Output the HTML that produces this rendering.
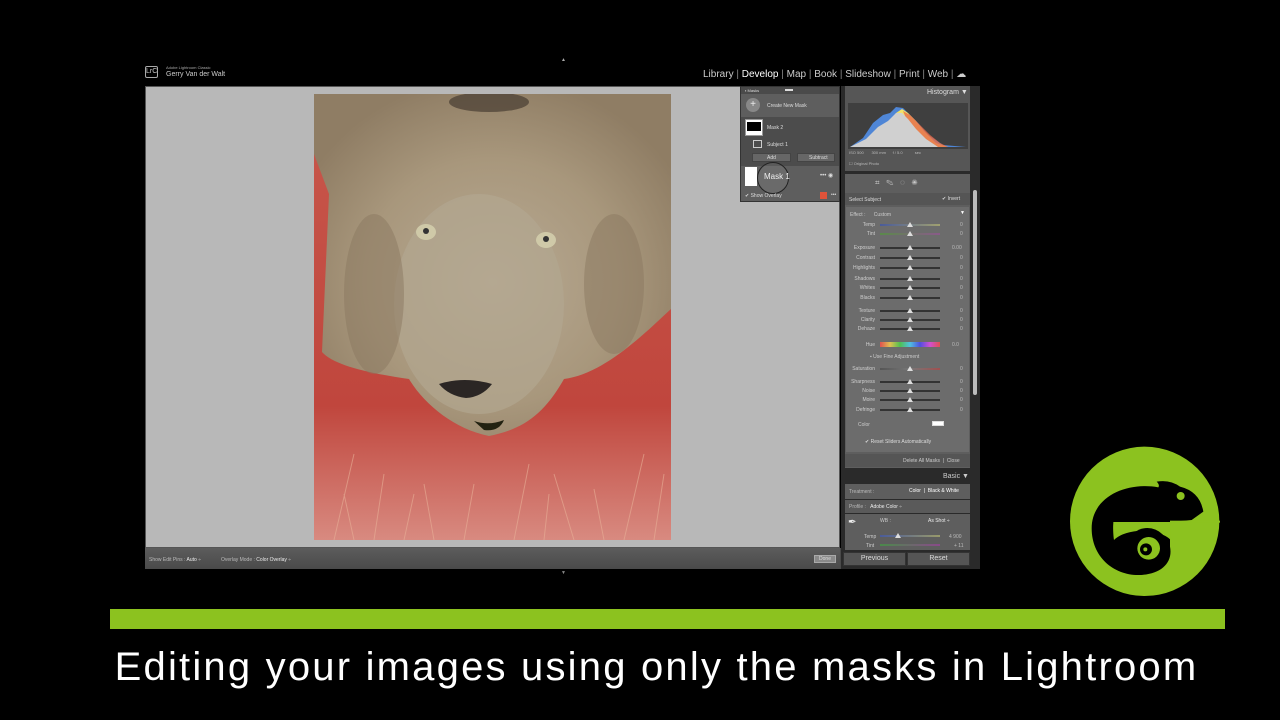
<!DOCTYPE html>
<html><head><meta charset="utf-8"><style>
*{margin:0;padding:0;box-sizing:border-box}
body{width:1280px;height:720px;background:#000;position:relative;overflow:hidden;font-family:"Liberation Sans",sans-serif}
.a{position:absolute}
.t{position:absolute;font-size:5px;color:#ddd;white-space:nowrap}
.lbl{position:absolute;font-size:5px;color:#cfcfcf;text-align:right;width:40px}
.sl{position:absolute;height:2px;background:#333}
.th{position:absolute;width:0;height:0;border-left:3px solid transparent;border-right:3px solid transparent;border-bottom:5px solid #ddd}
.val{position:absolute;font-size:5px;color:#bbb}
</style></head><body>
<!-- header -->
<div class="a" style="left:145px;top:66px;width:13px;height:12px;border:1px solid #aaa;border-radius:2px;font-size:7px;color:#ccc;text-align:center;line-height:10px">LrC</div>
<div class="t" style="left:166px;top:65px;font-size:4px;color:#aaa">Adobe Lightroom Classic</div>
<div class="t" style="left:166px;top:71px;font-size:7px;color:#ccc">Gerry Van der Walt</div>
<div class="t" style="left:561px;top:57px;font-size:5px;color:#aaa">▲</div>
<div class="t" style="left:703px;top:69px;font-size:10px;color:#ccc">Library <span style="color:#888">|</span> <b style="color:#fff;font-weight:normal">Develop</b> <span style="color:#888">|</span> Map <span style="color:#888">|</span> Book <span style="color:#888">|</span> Slideshow <span style="color:#888">|</span> Print <span style="color:#888">|</span> Web <span style="color:#888">|</span> ☁</div>
<!-- canvas -->
<div class="a" style="left:145px;top:86px;width:695px;height:462px;background:#b8b8b8;border:1px solid #555"></div>
<svg class="a" style="left:314px;top:94px" width="357" height="446" viewBox="0 0 357 446">
<defs>
<linearGradient id="r" x1="0" y1="0" x2="0" y2="1"><stop offset="0" stop-color="#c8584c"/><stop offset=".7" stop-color="#c0463d"/><stop offset="1" stop-color="#d88a80"/></linearGradient>
<radialGradient id="m" cx=".5" cy=".55" r=".6"><stop offset="0" stop-color="#b8aa94"/><stop offset=".6" stop-color="#a8977c"/><stop offset="1" stop-color="#8f7d64"/></radialGradient>
</defs>
<rect width="357" height="446" fill="url(#r)"/>
<path d="M0,0H357V215C330,240 290,280 250,285C230,320 210,335 175,342C140,335 110,310 95,285C60,280 20,272 8,258L15,100L0,60Z" fill="url(#m)"/>
<ellipse cx="165" cy="210" rx="85" ry="110" fill="#b2a690" opacity=".7"/>
<ellipse cx="175" cy="8" rx="40" ry="10" fill="#3a3028" opacity=".6"/>
<ellipse cx="60" cy="200" rx="30" ry="80" fill="#8a7860" opacity=".5"/>
<ellipse cx="300" cy="190" rx="30" ry="70" fill="#8a7860" opacity=".5"/>
<ellipse cx="112" cy="138" rx="10" ry="8" fill="#cfc9a8"/><circle cx="112" cy="137" r="3" fill="#333"/>
<ellipse cx="232" cy="146" rx="10" ry="8" fill="#cfc9a8"/><circle cx="232" cy="145" r="3" fill="#333"/>
<path d="M125,290Q150,282 178,290Q168,303 152,304Q135,302 125,290Z" fill="#2b2624"/>
<path d="M160,327Q175,332 190,326Q185,338 170,336Z" fill="#221"/>
<g stroke="#e8b098" stroke-width="1" opacity=".6" fill="none">
<path d="M20,446L40,360M60,446L70,380M120,446L110,390M200,446L215,370M260,446L240,380M310,446L330,360M90,446L100,400M340,446L350,380M230,446L235,400M40,446L30,400M150,446L160,390M290,446L280,395"/></g>
</svg>
<!-- masks panel -->
<div class="a" style="left:740px;top:86px;width:100px;height:116px;background:#5e5e5e;border:1px solid #333"></div>
<div class="a" style="left:741px;top:87px;width:98px;height:7px;background:#4a4a4a"></div>
<div class="t" style="left:745px;top:88px;font-size:4px">▪ Masks</div>
<div class="a" style="left:785px;top:89px;width:8px;height:1.5px;background:#ddd"></div>
<div class="a" style="left:746px;top:98px;width:14px;height:14px;border-radius:50%;background:#888;color:#eee;font-size:10px;text-align:center;line-height:14px">+</div>
<div class="t" style="left:767px;top:103px">Create New Mask</div>
<div class="a" style="left:741px;top:117px;width:98px;height:49px;background:#4c4c4c"></div>
<div class="a" style="left:745px;top:119px;width:18px;height:17px;background:#fff;border:1px solid #999"><div class="a" style="left:1px;top:2px;width:14px;height:9px;background:#000"></div></div>
<div class="t" style="left:767px;top:125px">Mask 2</div>
<div class="a" style="left:753px;top:140px;width:9px;height:8px;border:1px solid #ccc"></div>
<div class="t" style="left:767px;top:142px">Subject 1</div>
<div class="a" style="left:752px;top:153px;width:39px;height:9px;background:#666;border:1px solid #444"></div>
<div class="t" style="left:767px;top:155px">Add</div>
<div class="a" style="left:797px;top:153px;width:38px;height:9px;background:#666;border:1px solid #444"></div>
<div class="t" style="left:809px;top:155px">Subtract</div>
<div class="a" style="left:745px;top:167px;width:12px;height:19px;background:#fff"></div>
<div class="a" style="left:757px;top:162px;width:32px;height:32px;border-radius:50%;border:1px solid #222;background:rgba(255,255,255,.08)"></div>
<div class="t" style="left:764px;top:172px;font-size:8px;color:#eee">Mask 1</div>
<div class="t" style="left:820px;top:172px;font-size:6px">••• ◉</div>
<div class="t" style="left:745px;top:193px">✔ Show Overlay</div>
<div class="a" style="left:820px;top:192px;width:7px;height:7px;background:#e0533a"></div>
<div class="t" style="left:831px;top:192px">•••</div>
<!-- bottom toolbar -->
<div class="a" style="left:145px;top:548px;width:695px;height:21px;background:linear-gradient(#5c5c5c,#4a4a4a)"></div>
<div class="a" style="left:840px;top:548px;width:3px;height:21px;background:#4a4a4a"></div>
<div class="t" style="left:149px;top:557px;color:#bbb">Show Edit Pins : <span style="color:#eee">Auto</span> ÷</div>
<div class="t" style="left:221px;top:557px;color:#bbb">Overlay Mode : <span style="color:#eee">Color Overlay</span> ÷</div>
<div class="a" style="left:814px;top:555px;width:22px;height:8px;background:#8a8a8a;border:1px solid #aaa;font-size:5px;color:#ddd;text-align:center;line-height:7px">Done</div>
<div class="t" style="left:561px;top:570px;font-size:5px;color:#888">▼</div>
<!-- right panel -->
<div class="a" style="left:841px;top:86px;width:139px;height:483px;background:#2a2a2a"></div>
<div class="a" style="left:845px;top:86px;width:125px;height:85px;background:#565656"></div>
<div class="t" style="left:927px;top:89px;font-size:7px;color:#ddd">Histogram ▼</div>
<svg class="a" style="left:848px;top:103px" width="120" height="46"><rect width="120" height="46" fill="#3f3f3f"/>
<path d="M2,44L15,35L25,20L35,12L42,10L48,4L55,5L62,12L70,20L80,32L95,42L118,44Z" fill="#4f86d6"/>
<path d="M30,44L40,22L48,10L54,6L60,10L68,18L76,28L88,40L100,44Z" fill="#f1e26a"/>
<path d="M55,8L62,12L72,22L82,32L92,40L100,44L70,44Z" fill="#e66a4a" opacity=".8"/>
<path d="M2,44L18,36L30,24L40,18L48,10L54,10L60,16L68,26L78,36L90,44Z" fill="#d0d0d0"/></svg>
<div class="t" style="left:849px;top:150px;font-size:4px;color:#bbb">ISO 500 &nbsp;&nbsp;&nbsp;&nbsp;&nbsp; 300 mm &nbsp;&nbsp;&nbsp;&nbsp; f / 5.0 &nbsp;&nbsp;&nbsp;&nbsp;&nbsp;&nbsp;&nbsp;&nbsp;&nbsp; sec</div>
<div class="t" style="left:849px;top:161px;font-size:4px;color:#bbb">☐ Original Photo</div>
<div class="a" style="left:845px;top:174px;width:125px;height:294px;background:#5e5e5e"></div>
<div class="t" style="left:875px;top:178px;font-size:8px;color:#ccc">⌗ &nbsp;&nbsp;✎ &nbsp;&nbsp;◌ &nbsp;&nbsp;✺</div>
<div class="a" style="left:845px;top:193px;width:125px;height:12px;background:#555"></div>
<div class="t" style="left:849px;top:197px">Select Subject</div>
<div class="t" style="left:942px;top:196px">✔ Invert</div>
<div class="a" style="left:846px;top:207px;width:123px;height:245px;background:#6c6c6c"></div>
<div class="t" style="left:850px;top:212px;color:#ccc">Effect : &nbsp;&nbsp;&nbsp;&nbsp;&nbsp;Custom</div>
<div class="t" style="left:960px;top:210px;color:#fff">▼</div>
<div id="rows"></div>
<div class="a" style="left:880px;top:342px;width:60px;height:5px;background:linear-gradient(90deg,#e05050,#e0c050,#50c050,#50c0e0,#5050e0,#d050d0,#e05050)"></div>
<div class="t" style="left:870px;top:354px;color:#ccc">▪ Use Fine Adjustment</div>
<div class="t" style="left:858px;top:422px;color:#ccc">Color</div>
<div class="a" style="left:932px;top:421px;width:12px;height:5px;border:1px solid #ddd;background:#fff"></div>
<div class="t" style="left:865px;top:439px;color:#ddd">✔ Reset Sliders Automatically</div>
<div class="a" style="left:845px;top:454px;width:125px;height:13px;background:#555"></div>
<div class="t" style="left:903px;top:458px;color:#ccc">Delete All Masks &nbsp;| &nbsp;Close</div>
<div class="t" style="left:943px;top:473px;font-size:7px;color:#ccc">Basic ▼</div>
<div class="a" style="left:845px;top:484px;width:125px;height:15px;background:#5e5e5e"></div>
<div class="t" style="left:849px;top:489px;color:#bbb">Treatment :</div>
<div class="t" style="left:909px;top:488px;color:#fff">Color &nbsp;| &nbsp;Black &amp; White</div>
<div class="a" style="left:845px;top:500px;width:125px;height:13px;background:#5a5a5a"></div>
<div class="t" style="left:849px;top:504px;color:#bbb">Profile : &nbsp;&nbsp;<span style="color:#eee">Adobe Color</span> ÷</div>
<div class="a" style="left:845px;top:514px;width:125px;height:36px;background:#5e5e5e"></div>
<div class="t" style="left:848px;top:517px;font-size:10px;color:#eee">✒</div>
<div class="t" style="left:880px;top:518px;color:#ccc">WB :</div><div class="t" style="left:928px;top:518px;color:#eee">As Shot ÷</div>
<div class="t" style="left:864px;top:534px;color:#ccc">Temp</div><div class="sl" style="left:880px;top:535px;width:60px;background:linear-gradient(90deg,#4a5b9a,#999a6a)"></div><div class="th" style="left:895px;top:533px"></div><div class="val" style="left:949px;top:534px">4 900</div>
<div class="t" style="left:866px;top:543px;color:#ccc">Tint</div><div class="sl" style="left:880px;top:544px;width:60px;background:linear-gradient(90deg,#4a8a4a,#8a4a8a)"></div><div class="val" style="left:954px;top:543px">+ 11</div>
<div class="a" style="left:843px;top:552px;width:63px;height:14px;background:#555;border:1px solid #333;font-size:7px;color:#ddd;text-align:center;line-height:12px">Previous</div>
<div class="a" style="left:907px;top:552px;width:63px;height:14px;background:#555;border:1px solid #333;font-size:7px;color:#ddd;text-align:center;line-height:12px">Reset</div>
<div class="a" style="left:973px;top:190px;width:4px;height:205px;background:#bbb;border-radius:2px"></div>
<!-- green bar -->
<div class="a" style="left:110px;top:609px;width:1115px;height:20px;background:#8cc21f"></div>
<div class="a" style="left:0;top:645px;width:1313px;text-align:center;font-size:40px;color:#fff;letter-spacing:2.2px">Editing your images using only the masks in Lightroom</div>
<!-- logo -->
<svg class="a" style="left:1060px;top:440px" width="170" height="170" viewBox="0 0 510 510">
<circle cx="254" cy="244" r="224" fill="#8cc21f"/>
<path d="M430,215Q420,155 360,140Q330,118 290,125Q300,135 295,142C200,125 95,170 95,265C95,350 160,405 235,405C300,405 340,370 330,320L330,246L395,240Z" fill="#000"/>
<path d="M160,246H332V300C300,265 200,262 162,300Z" fill="#8cc21f"/>
<path d="M160,246C158,275 160,290 162,300" fill="#8cc21f"/>
<circle cx="262" cy="328" r="64" fill="#000"/>
<circle cx="266" cy="325" r="34" fill="#8cc21f"/>
<circle cx="258" cy="328" r="18" fill="#000"/>
<circle cx="256" cy="328" r="6" fill="#8cc21f"/>
<rect x="330" y="242" width="150" height="6" fill="#8cc21f"/>
<circle cx="362" cy="168" r="12" fill="#8cc21f"/>
</svg>
<script>
var r=[["Temp",224,"linear-gradient(90deg,#4a5b9a,#a0a070)",""],["Tint",233,"linear-gradient(90deg,#5a8a4a,#8a5a8a)",""],["Exposure",247,"#333","0.00"],["Contrast",257,"#333","0"],["Highlights",267,"#333","0"],["Shadows",278,"#333","0"],["Whites",287,"#333","0"],["Blacks",297,"#333","0"],["Texture",310,"#333","0"],["Clarity",319,"#333","0"],["Dehaze",328,"#333","0"],["Hue",344,"","0.0"],["Saturation",368,"linear-gradient(90deg,#555,#777,#a05050)","0"],["Sharpness",381,"#333","0"],["Noise",390,"#333","0"],["Moire",399,"#333","0"],["Defringe",409,"#333","0"]];
var h="";r.forEach(function(x){h+='<div class="lbl" style="left:835px;top:'+(x[1]-2)+'px">'+x[0]+'</div>';if(x[2])h+='<div class="sl" style="left:880px;top:'+x[1]+'px;width:60px;background:'+x[2]+'"></div>';h+='<div class="th" style="left:907px;top:'+(x[1]-2)+'px"></div>';h+='<div class="val" style="left:'+(x[3].length>1?952:960)+'px;top:'+(x[1]-2)+'px">'+(x[3]||"0")+'</div>';});
document.getElementById("rows").innerHTML=h;
</script>
</body></html>
